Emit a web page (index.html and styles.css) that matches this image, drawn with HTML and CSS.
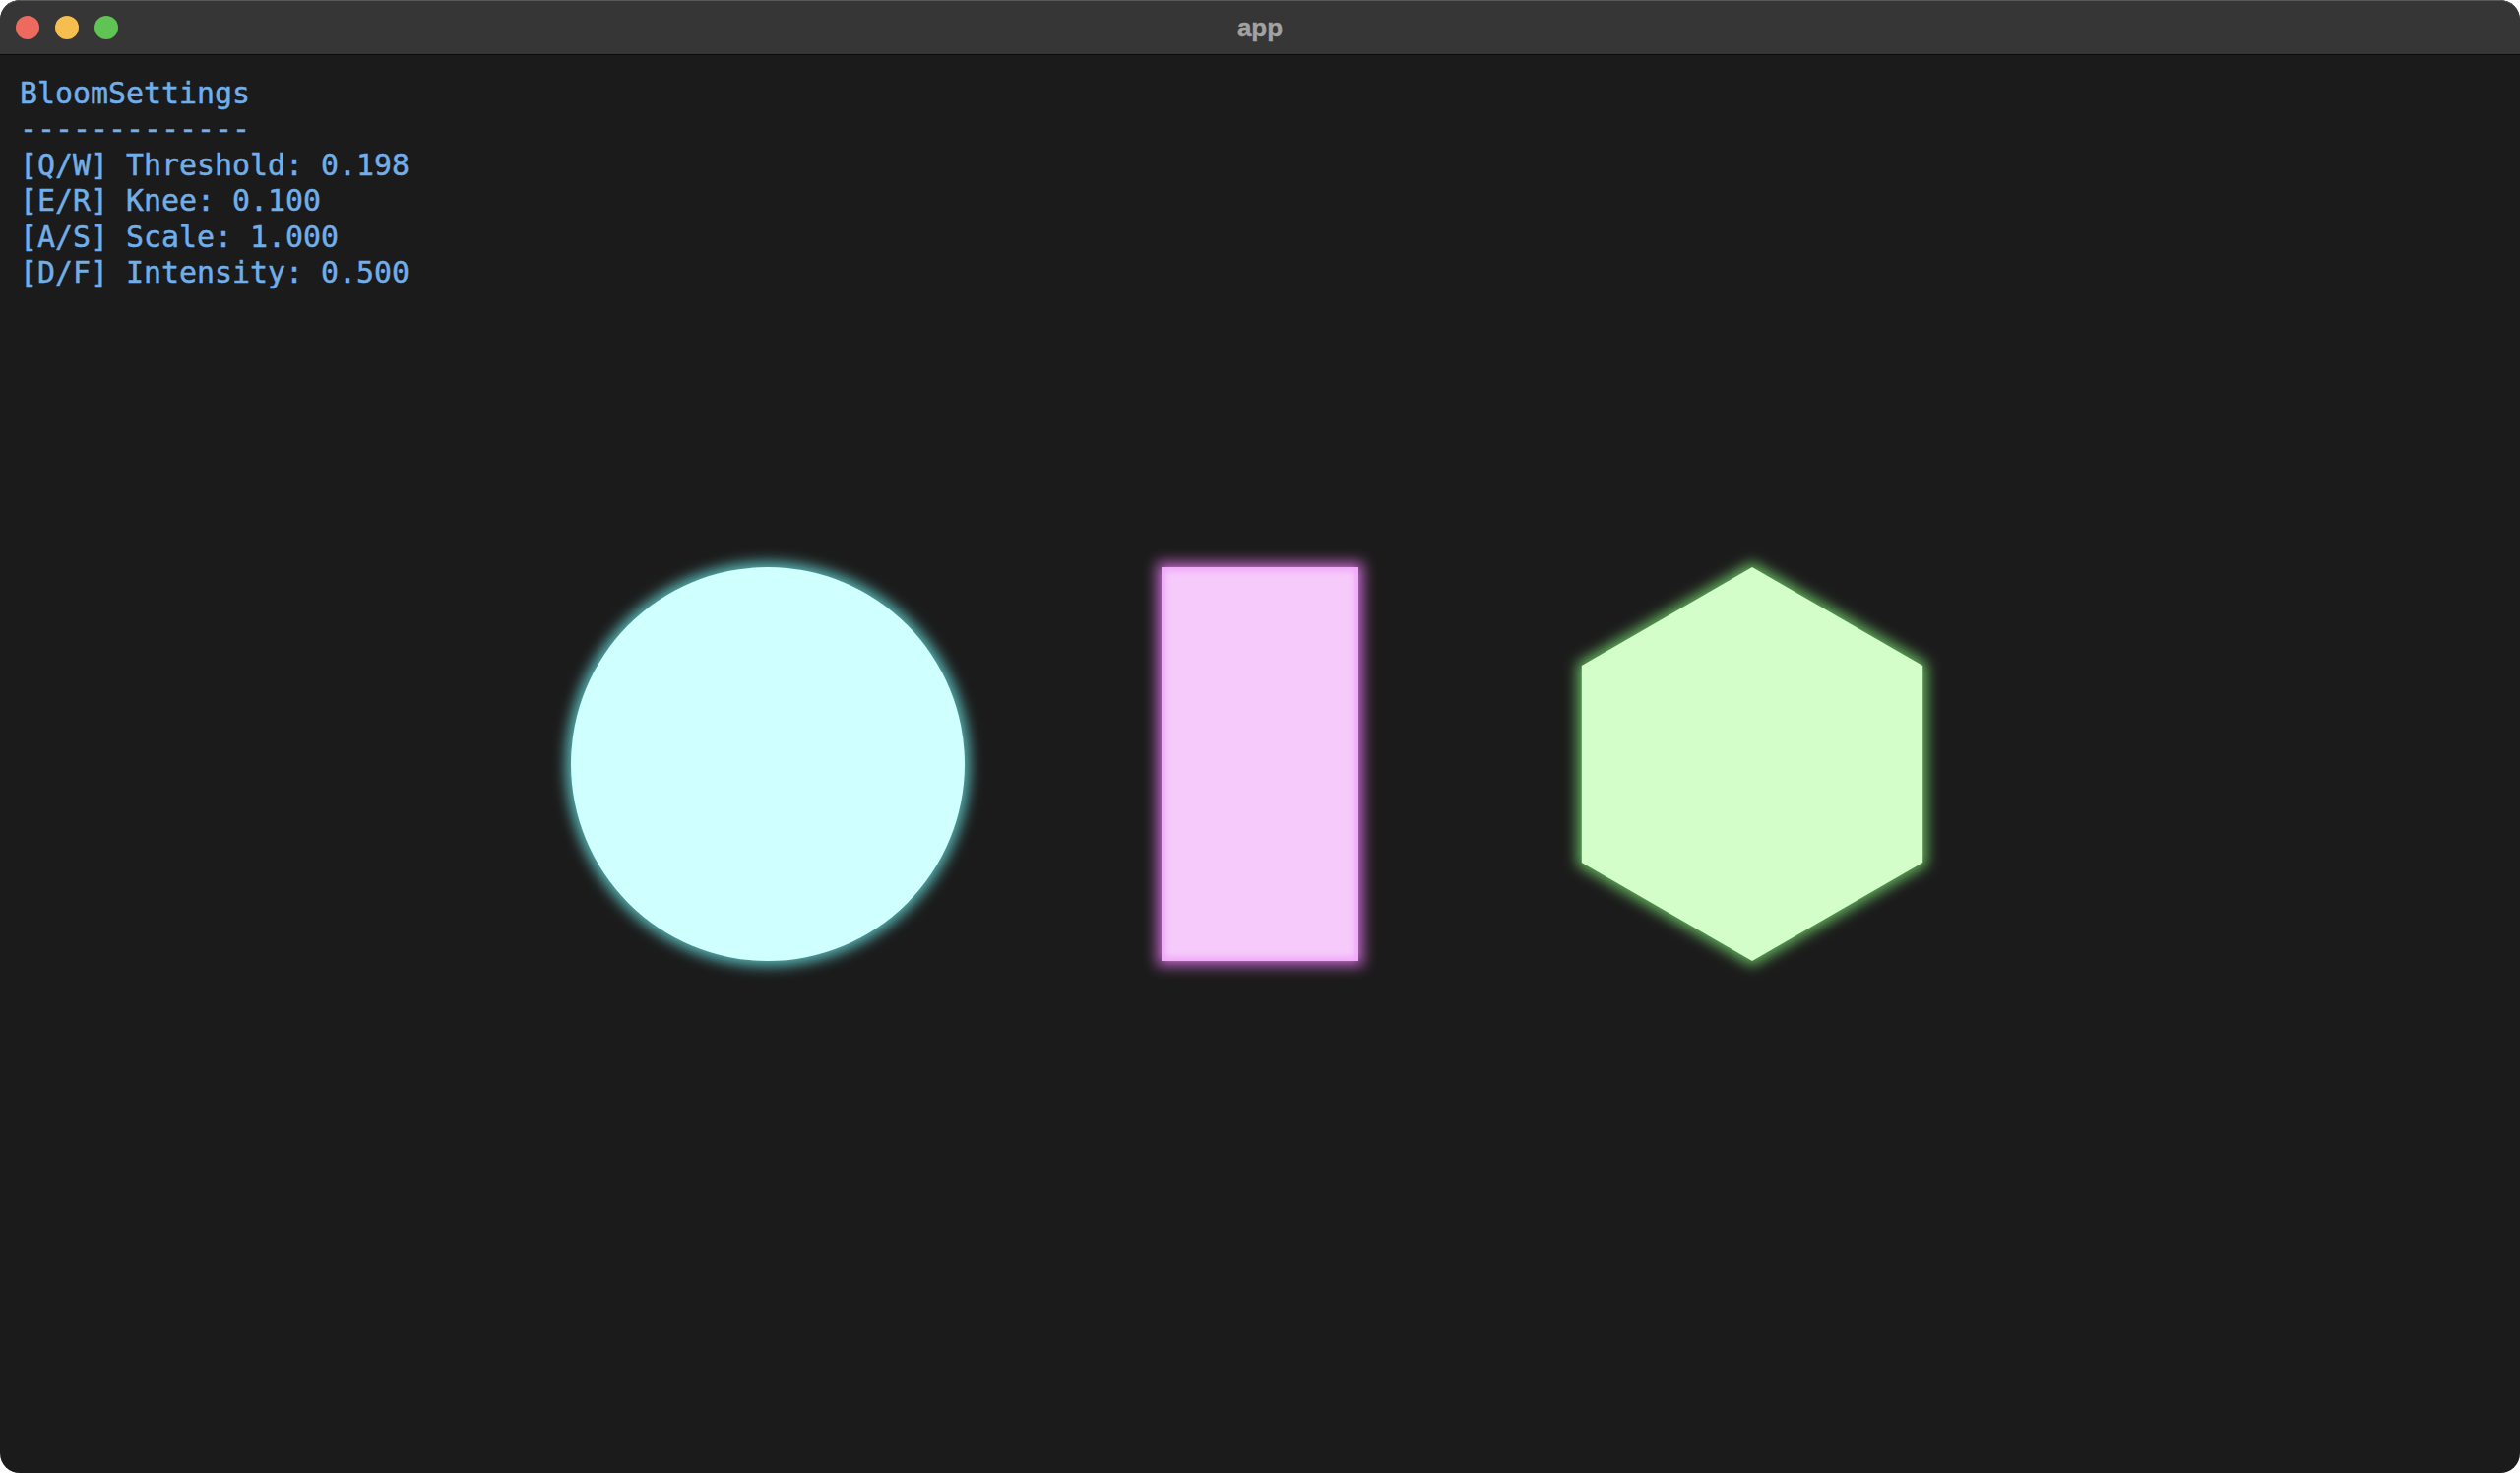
FILE: index.html
```html
<!DOCTYPE html>
<html lang="en">
<head>
<meta charset="utf-8">
<title>app</title>
<link rel="stylesheet" href="styles.css">
</head>
<body>
<div class="window">
  <header class="titlebar">
    <div class="lights">
      <span class="light red"></span>
      <span class="light yellow"></span>
      <span class="light green"></span>
    </div>
    <div class="title">app</div>
  </header>
  <main class="content">
    <pre class="hud">BloomSettings
-------------
[Q/W] Threshold: 0.198
[E/R] Knee: 0.100
[A/S] Scale: 1.000
[D/F] Intensity: 0.500</pre>
    <div class="stage">
      <div class="slot">
        <svg class="shape" width="460" height="460" viewBox="-30 -30 460 460">
          <defs>
            <filter id="glowC" x="-20%" y="-20%" width="140%" height="140%">
              <feGaussianBlur stdDeviation="7"/>
            </filter>
          </defs>
          <circle cx="200" cy="200" r="205" fill="#5ab8b8" filter="url(#glowC)"/>
          <circle cx="200" cy="200" r="200" fill="#d0ffff"/>
        </svg>
      </div>
      <div class="slot">
        <svg class="shape" width="260" height="460" viewBox="-30 -30 260 460">
          <defs>
            <filter id="glowR" x="-30%" y="-20%" width="160%" height="140%">
              <feGaussianBlur stdDeviation="7"/>
            </filter>
            <filter id="innerR" x="-10%" y="-10%" width="120%" height="120%">
              <feGaussianBlur stdDeviation="3"/>
            </filter>
          </defs>
          <rect x="-5" y="-5" width="210" height="410" fill="#b860c0" filter="url(#glowR)"/>
          <rect x="0" y="0" width="200" height="400" fill="#f0a8f8"/>
          <rect x="4" y="4" width="192" height="392" fill="#f6cbfb" filter="url(#innerR)"/>
        </svg>
      </div>
      <div class="slot">
        <svg class="shape" width="420" height="460" viewBox="-210 -230 420 460">
          <defs>
            <filter id="glowH" x="-20%" y="-20%" width="140%" height="140%">
              <feGaussianBlur stdDeviation="7"/>
            </filter>
          </defs>
          <polygon points="0,-205 177.5,-102.5 177.5,102.5 0,205 -177.5,102.5 -177.5,-102.5" fill="#66b860" filter="url(#glowH)"/>
          <polygon points="0,-200 173.2,-100 173.2,100 0,200 -173.2,100 -173.2,-100" fill="#d3fdc9"/>
        </svg>
      </div>
    </div>
  </main>
</div>
</body>
</html>
```

FILE: styles.css
```css
html, body {
  margin: 0;
  padding: 0;
  background: #ffffff;
}

body {
  width: 2560px;
  height: 1496px;
  overflow: hidden;
}

.window {
  width: 2560px;
  height: 1496px;
  border-radius: 20px;
  overflow: hidden;
  background: #1b1b1b;
  display: flex;
  flex-direction: column;
}

.titlebar {
  height: 54px;
  flex: 0 0 54px;
  background: #363636;
  border-top: 1px solid #5a5a5a;
  border-bottom: 1px solid #0b0b0b;
  position: relative;
  display: flex;
  align-items: center;
  justify-content: center;
  border-radius: 20px 20px 0 0;
}

.lights {
  position: absolute;
  left: 16px;
  top: 15px;
  display: flex;
  gap: 16px;
}

.light {
  width: 24px;
  height: 24px;
  border-radius: 50%;
  display: block;
}

.light.red { background: #ee6a5f; }
.light.yellow { background: #f5be4f; }
.light.green { background: #5fc454; }

.title {
  font-family: "Liberation Sans", Arial, sans-serif;
  font-weight: bold;
  font-size: 26px;
  color: #a2a2a2;
  line-height: 1;
  -webkit-text-stroke: 0.4px #a2a2a2;
}

.content {
  flex: 1 1 auto;
  display: grid;
  grid-template: 1fr / 1fr;
}

.hud {
  grid-area: 1 / 1;
  align-self: start;
  justify-self: start;
  margin: 0;
  padding: 21px 0 0 20px;
  font-family: "DejaVu Sans Mono", "Liberation Mono", monospace;
  font-size: 29.9px;
  line-height: 36.4px;
  color: #72aee8;
  -webkit-text-stroke: 0.5px #72aee8;
  z-index: 1;
}

.stage {
  grid-area: 1 / 1;
  display: flex;
  justify-content: center;
  align-items: center;
  gap: 100px;
}

.slot {
  width: 400px;
  height: 400px;
  display: flex;
  align-items: center;
  justify-content: center;
}

.shape {
  display: block;
  flex: 0 0 auto;
}
```
